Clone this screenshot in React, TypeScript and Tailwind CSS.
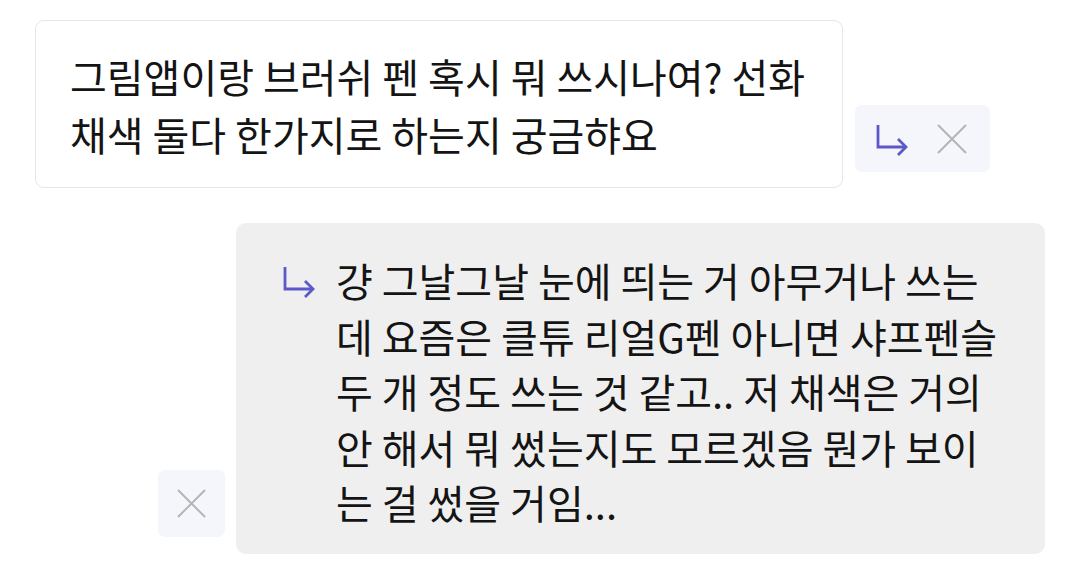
import React from "react";

const FONT = "font-['Noto_Sans_CJK_KR','Noto_Sans',sans-serif]";

function ReplyArrow({ className = "" }: { className?: string }) {
  return (
    <svg viewBox="0 0 36 36" className={className} fill="none" stroke="#5b59c9" strokeWidth={2.8}>
      <path d="M5 4V26H33" strokeLinejoin="miter" />
      <path d="M25 18L33 26L25 34" strokeLinejoin="miter" />
    </svg>
  );
}

function CloseX({ className = "" }: { className?: string }) {
  return (
    <svg viewBox="0 0 30 30" className={className} fill="none" stroke="#b4b4b4" strokeWidth={2}>
      <path d="M1 1L29 29M29 1L1 29" />
    </svg>
  );
}

const replyLines = [
  "걍 그날그날 눈에 띄는 거 아무거나 쓰는",
  "데 요즘은 클튜 리얼G펜 아니면 샤프펜슬",
  "두 개 정도 쓰는 것 같고.. 저 채색은 거의",
  "안 해서 뭐 썼는지도 모르겠음 뭔가 보이",
  "는 걸 썼을 거임...",
];

export default function App() {
  return (
    <div className={`w-[1080px] h-[566px] bg-white overflow-hidden ${FONT} font-normal text-[#141414]`}>
      {/* question */}
      <div className="flex items-end pl-[35px] pt-[20px]">
        <div className="w-[808px] rounded-[9px] border-[1.5px] border-[#e6e6e6] bg-white pl-[34px] pt-[26px] pb-[24px] text-[40px] leading-[58px]">
          <div className="whitespace-nowrap">그림앱이랑 브러쉬 펜 혹시 뭐 쓰시나여? 선화</div>
          <div className="whitespace-nowrap">채색 둘다 한가지로 하는지 궁금햐요</div>
        </div>
        <div className="ml-[12px] mb-[16px] flex h-[67px] w-[135px] items-center rounded-[7px] bg-[#f5f5fc] pl-[18px]">
          <ReplyArrow className="h-[36px] w-[36px]" />
          <CloseX className="ml-[28px] h-[30px] w-[30px]" />
        </div>
      </div>

      {/* reply */}
      <div className="mt-[35px] flex items-end justify-end pr-[35px]">
        <div className="mr-[11px] mb-[17px] flex h-[67px] w-[67px] items-center justify-center rounded-[7px] bg-[#f5f5fc]">
          <CloseX className="h-[29px] w-[29px]" />
        </div>
        <div className="flex w-[809px] rounded-[10px] bg-[#efefef] pl-[44px] pt-[30px] pb-[23px]">
          <ReplyArrow className="mt-[10px] h-[36px] w-[36px] shrink-0" />
          <div className="ml-[20px] text-[40px] leading-[55.5px]">
            {replyLines.map((line) => (
              <div key={line} className="whitespace-nowrap">
                {line}
              </div>
            ))}
          </div>
        </div>
      </div>
    </div>
  );
}
